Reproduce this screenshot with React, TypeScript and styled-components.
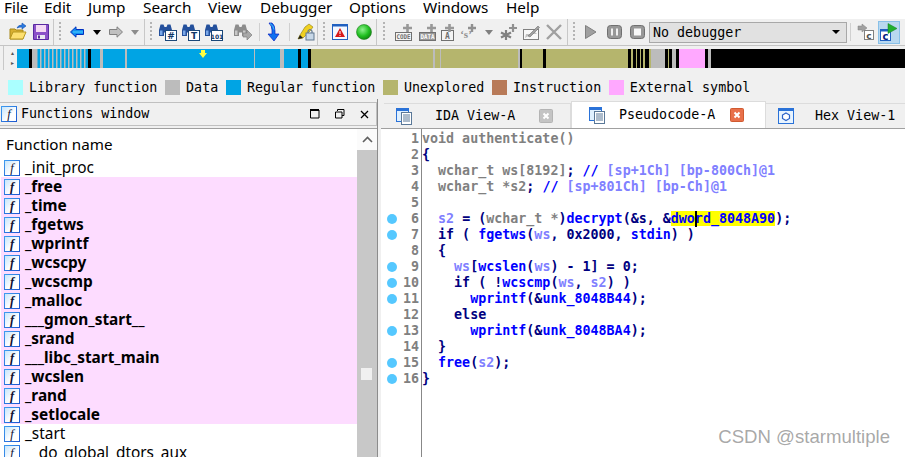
import React from 'react';
import styled, { createGlobalStyle } from 'styled-components';

const GlobalStyle = createGlobalStyle`
  html, body { margin: 0; padding: 0; background: #fff; }
  #root { width: 905px; height: 457px; overflow: hidden; }
`;

const mono = '"DejaVu Sans Mono", "Liberation Mono", monospace';
const ui = '"Noto Sans", "Open Sans", sans-serif';

const Page = styled.div`
  position: relative;
  width: 905px;
  height: 457px;
  display: flex;
  flex-direction: column;
  overflow: hidden;
  background: #f0f0f0;
`;

/* ---- menu ---- */
const MenuBar = styled.div`
  height: 19px;
  flex: none;
  background: #fff;
  display: flex;
  align-items: flex-start;
  font: 15.3px/15px ${ui};
  color: #000;
`;
const MenuItem = styled.span<{ $w: number }>`
  width: ${p => p.$w}px;
  flex: none;
  padding-left: 4px;
  box-sizing: border-box;
`;

/* ---- toolbar ---- */
const ToolBar = styled.div`
  height: 27px;
  flex: none;
  display: flex;
  background: #f0f0f0;
  border-bottom: 1px solid #c4c4c4;
  box-sizing: border-box;
`;
const ToolGroup = styled.div<{ $w: number; $last?: boolean }>`
  width: ${p => p.$w}px;
  flex: ${p => (p.$last ? '1' : 'none')};
  display: flex;
  align-items: center;
  box-sizing: border-box;
  border-right: ${p => (p.$last ? 'none' : '1px solid #c8c8c8')};
`;
const Grip = styled.div<{ $w: number }>`
  width: ${p => p.$w}px;
  flex: none;
  height: 20px;
  display: flex;
  justify-content: center;
  &::before {
    content: '';
    width: 2px;
    height: 100%;
    background: repeating-linear-gradient(#b4b4b4 0 2px, transparent 2px 4px);
  }
`;
const Slot = styled.div<{ $w: number }>`
  width: ${p => p.$w}px;
  flex: none;
  height: 24px;
  display: flex;
  align-items: center;
  justify-content: center;
  svg { flex: none; display: block; overflow: visible; }
`;
const ThinSep = styled.div`
  width: 10px;
  flex: none;
  height: 18px;
  display: flex;
  justify-content: center;
  &::before { content: ''; width: 1px; background: #d0d0d0; }
`;
const ActiveSlot = styled(Slot)`
  height: 23px;
  background: #b8d8f0;
  border: 1px solid #88c0e8;
  box-sizing: border-box;
  margin-left: 1px;
`;
const DebuggerSelect = styled.div`
  width: 198px;
  height: 21px;
  flex: none;
  margin-left: 1px;
  box-sizing: border-box;
  border: 1px solid #a8a8a8;
  background: #e1e1e1;
  display: flex;
  align-items: center;
  justify-content: space-between;
  padding: 0 6px 0 3px;
  font: 13.33px/19px ${mono};
  color: #000;
`;
const SelectArrow = styled.span`
  width: 0;
  height: 0;
  border-left: 4px solid transparent;
  border-right: 4px solid transparent;
  border-top: 4px solid #000;
`;

/* ---- navigation band ---- */
const NavArea = styled.div`
  height: 26px;
  flex: none;
  display: flex;
  align-items: flex-start;
`;
const NavGrip = styled.div`
  width: 17px;
  height: 24px;
  flex: none;
  box-sizing: border-box;
  border-left: 1px solid #c8c8c8;
  margin-left: 3px;
  margin-right: -3px;
  color: #555;
  font: 6px/6px ${ui};
  display: flex;
  flex-direction: column;
  align-items: center;
  justify-content: center;
  gap: 4px;
`;
const NavBand = styled.svg`
  display: block;
  margin-top: 3px;
  flex: none;
`;

/* ---- legend ---- */
const Legend = styled.div`
  height: 27px;
  flex: none;
  box-sizing: border-box;
  padding: 7px 0 0 8px;
  display: flex;
  gap: 7.7px;
  align-items: flex-start;
  font: 13.33px/17px ${mono};
  color: #000;
`;
const LegendItem = styled.span`
  display: flex;
  gap: 6px;
  align-items: center;
  height: 17px;
  white-space: pre;
`;
const Swatch = styled.i<{ $c: string }>`
  width: 15px;
  height: 15px;
  background: ${p => p.$c};
  display: block;
  flex: none;
`;

/* ---- panels ---- */
const Panels = styled.div`
  flex: 1;
  min-height: 0;
  display: flex;
`;
const LeftPanel = styled.div`
  width: 378px;
  flex: none;
  display: flex;
  flex-direction: column;
  border-right: 1px solid #8c8c8c;
  box-sizing: border-box;
`;
const PanelHeader = styled.div`
  height: 24px;
  flex: none;
  box-sizing: border-box;
  margin-top: 3px;
  border: 1px solid #c0c0c0;
  border-left: none;
  display: flex;
  align-items: center;
  padding-left: 1px;
  font: 13.33px/20px ${mono};
  color: #000;
`;
const PanelTitle = styled.span`
  flex: 1;
  margin-left: 4px;
`;
const PanelBtn = styled.span<{ $w: number }>`
  width: ${p => p.$w}px;
  flex: none;
  display: flex;
  justify-content: center;
`;
const ListArea = styled.div`
  flex: 1;
  min-height: 0;
  display: flex;
  background: #fff;
  border-top: 1px solid #a0a0a0;
  margin-top: 2px;
`;
const FnList = styled.div`
  flex: 1;
  min-width: 0;
  padding-left: 1px;
`;
const FnHeader = styled.div`
  height: 29px;
  box-sizing: border-box;
  padding: 5px 0 0 5px;
  font: 15.2px/20px ${ui};
  color: #000;
`;
const FnRow = styled.div<{ $ext?: boolean }>`
  height: 19px;
  display: flex;
  align-items: center;
  gap: 5px;
  padding-left: 3px;
  background: ${p => (p.$ext ? '#fddcff' : 'transparent')};
  font: ${p => (p.$ext ? 700 : 400)} 15.4px/19px ${ui};
  color: #000;
  white-space: pre;
`;
const ScrollBar = styled.div`
  width: 20px;
  flex: none;
  display: flex;
  flex-direction: column;
`;
const ScrollUp = styled.div`
  height: 21px;
  flex: none;
  background: #fbfbfb;
  display: flex;
  align-items: center;
  justify-content: center;
`;
const ScrollTrack = styled.div`
  flex: 1;
  background: #c8c8c8;
  padding: 218px 0 0 4px;
`;
const ScrollThumb = styled.div`
  width: 11px;
  height: 12px;
  background: #f0f0f0;
`;
const Splitter = styled.div`
  width: 3px;
  flex: none;
  background: #f0f0f0;
`;

const RightPanel = styled.div`
  flex: 1;
  min-width: 0;
  display: flex;
  flex-direction: column;
`;
const TabBar = styled.div`
  height: 27px;
  flex: none;
  display: flex;
  align-items: flex-end;
  padding-left: 3px;
  border-bottom: 1px solid #a0a0a0;
  margin-top: 2px;
  overflow: hidden;
`;
const Tab = styled.div<{ $w: number; $active?: boolean }>`
  width: ${p => p.$w}px;
  height: ${p => (p.$active ? 27 : 25)}px;
  flex: none;
  box-sizing: border-box;
  display: flex;
  align-items: center;
  padding-left: ${p => (p.$active ? 17 : 12)}px;
  background: ${p => (p.$active ? '#fff' : '#f0f0f0')};
  border: 1px solid #dcdcdc;
  border-bottom: none;
  border-left-width: ${p => (p.$active ? 1 : 0)}px;
  font: 13.33px/20px ${mono};
  color: #000;
  white-space: pre;
`;
const TabLabel = styled.span<{ $ml: number; $w: number }>`
  margin-left: ${p => p.$ml}px;
  width: ${p => p.$w}px;
  flex: none;
`;

const CodeArea = styled.div`
  flex: 1;
  min-height: 0;
  background: #fff;
  display: flex;
`;
const Gutter = styled.div`
  width: 41px;
  flex: none;
  box-sizing: border-box;
  border-right: 1px solid #888;
  padding-top: 2px;
`;
const GutterRow = styled.div`
  height: 16px;
  display: flex;
  align-items: center;
  justify-content: space-between;
  padding: 0 2px 0 6px;
  font: 700 13.33px/16px ${mono};
  color: #808080;
`;
const Dot = styled.i<{ $on: boolean }>`
  width: 10px;
  height: 10px;
  border-radius: 50%;
  display: block;
  background: ${p => (p.$on ? '#55c8ff' : 'transparent')};
`;
const CodeBody = styled.div`
  flex: 1;
  min-width: 0;
  padding-top: 2px;
  font: 700 13.33px/16px ${mono};
`;
const CodeLine = styled.div`
  height: 16px;
  white-space: pre;
`;
const colours: Record<string, string> = {
  g: '#808080',
  n: '#000080',
  b: '#0000ff',
  v: '#8080ff',
};
const Tok = styled.span<{ $k: string }>`
  color: ${p => colours[p.$k]};
`;
const Highlight = styled.span`
  position: relative;
  background: #ffff00;
  color: #0000ff;
  &::after {
    content: '';
    position: absolute;
    left: 24px;
    top: 0;
    width: 2px;
    height: 16px;
    background: #000;
  }
`;
const Watermark = styled.div`
  position: absolute;
  right: 15px;
  bottom: 10px;
  font: 18.6px/20px "Liberation Sans", sans-serif;
  color: rgba(130, 130, 130, 0.7);
`;

/* ---- icons ---- */
const FnIcon = () => (
  <svg width="16" height="16" viewBox="0 0 16 16">
    <defs>
      <linearGradient id="fnb" x1="0" y1="0" x2="1" y2="1">
        <stop offset="0" stopColor="#3f9cf0" />
        <stop offset="1" stopColor="#1c58d0" />
      </linearGradient>
      <linearGradient id="fnf" x1="0" y1="0" x2="1" y2="1">
        <stop offset="0" stopColor="#c4e4fb" />
        <stop offset="0.6" stopColor="#fff" />
      </linearGradient>
    </defs>
    <rect x="0.5" y="0.5" width="15" height="15" fill="url(#fnf)" stroke="url(#fnb)" />
    <text x="8" y="12" textAnchor="middle" fontFamily="'Liberation Serif', serif" fontStyle="italic" fontSize="12.5" fill="#101030">f</text>
  </svg>
);

const DocIcon = () => (
  <svg width="16" height="17" viewBox="0 0 16 17">
    <rect x="0.5" y="0.5" width="12" height="13" fill="#dff0ff" stroke="#2a72d8" />
    <rect x="0.5" y="0.5" width="12" height="2.5" fill="#2a72d8" />
    <rect x="5.5" y="4.5" width="10" height="12" fill="#fff" stroke="#5a7898" />
    <path d="M7 7h7M7 9h7M7 11h7M7 13h7" stroke="#5a7898" />
  </svg>
);
const HexIcon = () => (
  <svg width="16" height="16" viewBox="0 0 16 16">
    <rect x="0.5" y="0.5" width="15" height="15" fill="#e8f4ff" stroke="#2a72d8" />
    <rect x="0.5" y="0.5" width="15" height="2.5" fill="#2a72d8" />
    <path d="M8 5l3.5 2v3.5L8 12.5 4.5 10.5V7z" fill="#fff" stroke="#2a62c8" strokeWidth="1.2" />
  </svg>
);
const CloseBox = ({ c }: { c: 'grey' | 'red' }) => (
  <svg width="14" height="14" viewBox="0 0 14 14">
    <rect x="0.5" y="0.5" width="13" height="13" rx="1" fill={c === 'red' ? '#e8704a' : '#c4c4c4'} stroke={c === 'red' ? '#d05a30' : '#b4b4b4'} />
    <path d="M4.5 4.5l5 5M9.5 4.5l-5 5" stroke="#fff" strokeWidth="2" />
  </svg>
);
const Folder = () => (
  <svg width="18" height="18" viewBox="0 0 18 18">
    <path d="M1 6h5l1 1h7v9H1z" fill="#d8b030" stroke="#a88818" />
    <path d="M1 16l3-7h13l-3 7z" fill="#fde070" stroke="#b89820" />
    <path d="M8 5q1-3 5-3V0l4 3-4 3V4q-3 0-5 1z" fill="#2a7ae0" stroke="#1450b0" strokeWidth="0.6" />
  </svg>
);
const Floppy = () => (
  <svg width="16" height="16" viewBox="0 0 16 16">
    <path d="M0.5 0.5h15v15h-15z" fill="#8a50c8" stroke="#5828a0" />
    <rect x="3" y="1" width="10" height="7" fill="#f4d8f4" />
    <rect x="4" y="11" width="8" height="4" fill="#e8e8f0" />
    <rect x="5" y="11.5" width="2" height="3" fill="#5828a0" />
  </svg>
);
const ArrowL = () => (
  <svg width="14" height="12" viewBox="0 0 14 12">
    <path d="M0.5 6L6 0.8V3.5H13.5V8.5H6V11.2z" fill="#1090f0" stroke="#0030c0" />
    <path d="M3 6h10" stroke="#50d0ff" />
  </svg>
);
const ArrowR = () => (
  <svg width="14" height="12" viewBox="0 0 14 12">
    <path d="M13.5 6L8 0.8V3.5H0.5V8.5H8V11.2z" fill="#c0c0c0" stroke="#808080" />
  </svg>
);
const Drop = ({ c, w = 8 }: { c: string; w?: number }) => (
  <svg width={w} height={w / 2 + 1} viewBox="0 0 8 5">
    <path d="M0 0h8L4 5z" fill={c} />
  </svg>
);
const Binoc = ({ label, grey }: { label?: string; grey?: boolean }) => {
  const c = grey ? '#8c8c8c' : '#24509c';
  return (
    <svg width="18" height="17" viewBox="0 0 18 17">
      <path d="M0 6l1.5-5.5h3L5.5 3h2l1-2.500h3L13 6v6H8V8.500H5V12H0z" fill={c} />
      <path d="M1 6.500h2.500V11H1zM9 6.500h2.500V10H9z" fill={grey ? '#c8c8c8' : '#7aa8e8'} />
      {label ? (
        <>
          <rect x="6.500" y="6.500" width="11" height="10" fill="#fff" stroke="#1c4878" />
          <text x="12" y="14.800" textAnchor="middle" fontFamily="'DejaVu Sans', sans-serif" fontWeight="700" fontSize={label.length > 1 ? 6 : 9} fill="#103868">{label}</text>
        </>
      ) : (
        <path d="M9 9h4V6l5 5-5 5v-3H9z" fill="#a8a8a8" stroke="#808080" strokeWidth="0.7" />
      )}
    </svg>
  );
};
const BlueDown = () => (
  <svg width="14" height="19" viewBox="0 0 14 19">
    <path d="M2 0h3q3 2 3 8v3h4l-5 7-6-7h4V7Q5 3 2 0z" fill="#1070f0" stroke="#0820c0" strokeWidth="0.7" />
    <path d="M3 0.5q3.500 2 4 6" stroke="#40c0f0" fill="none" />
  </svg>
);
const Marker = () => (
  <svg width="17" height="18" viewBox="0 0 17 18">
    <path d="M0 16l2-4 5-8 4-3 4 3-3 4-7 7z" fill="#f0d020" stroke="#8a7a10" strokeWidth="0.6" />
    <path d="M0 16l2-4 3 3z" fill="#202020" />
    <rect x="8" y="10" width="8" height="7" fill="#c8d8e8" stroke="#607890" />
    <path d="M10 10V8q2-3 4 0v2" fill="none" stroke="#607890" strokeWidth="1.2" />
  </svg>
);
const WarnWindow = () => (
  <svg width="16" height="16" viewBox="0 0 16 16">
    <rect x="0.5" y="0.5" width="15" height="15" fill="#f4f8ff" stroke="#2060c0" />
    <rect x="0.5" y="0.5" width="15" height="2" fill="#2060c0" />
    <path d="M8 4l5 9H3z" fill="#d81818" />
    <path d="M8 7v3M8 11v1" stroke="#fff" />
  </svg>
);
const GreenDot = () => (
  <svg width="16" height="16" viewBox="0 0 16 16">
    <defs>
      <radialGradient id="gd" cx="0.4" cy="0.35" r="0.7">
        <stop offset="0" stopColor="#90f090" />
        <stop offset="0.6" stopColor="#20c020" />
        <stop offset="1" stopColor="#108010" />
      </radialGradient>
    </defs>
    <circle cx="8" cy="8" r="7.500" fill="url(#gd)" stroke="#208020" strokeWidth="0.6" />
  </svg>
);
const PlusBox = ({ label, w = 17 }: { label: string; w?: number }) => (
  <svg width={w} height="17" viewBox={`0 0 ${w} 17`}>
    <rect x="0.5" y={w < 14 ? 6.5 : 8.5} width={w - 1} height={w < 14 ? 10 : 8} fill={label === 'DATA' ? '#989898' : '#f4f4f4'} stroke="#707070" />
    <text x={w / 2} y="15" textAnchor="middle" fontFamily="'DejaVu Sans Mono', monospace" fontSize={w < 14 ? 8 : 6.5} textLength={w < 14 ? undefined : w - 3} lengthAdjust="spacingAndGlyphs" fontWeight="700" fill={label === 'DATA' ? '#fff' : '#707070'}>{label}</text>
    <path d={`M${w - 9} 4h9M${w - 4.5} 0v8`} stroke="#989898" strokeWidth="2.600" />
  </svg>
);
const SQuote = () => (
  <svg width="18" height="18" viewBox="0 0 18 18">
    <text x="6" y="15" textAnchor="middle" fontFamily="'Liberation Serif', serif" fontWeight="700" fontSize="11" fill="#909090">‘s’</text>
    <path d="M8 5h8M12 1v8" stroke="#909090" strokeWidth="2.400" />
  </svg>
);
const Asterisk = () => (
  <svg width="17" height="16" viewBox="0 0 17 16">
    <path d="M6 6v10M1 8.500l10 5M1 13.500l10-5" stroke="#808080" strokeWidth="2.200" />
    <path d="M9 4h8M13 0v8" stroke="#909090" strokeWidth="2.200" />
  </svg>
);
const Pencil = () => (
  <svg width="17" height="16" viewBox="0 0 17 16">
    <rect x="0.5" y="5.500" width="15" height="10" fill="#f8f8f8" stroke="#808080" />
    <path d="M2 14l10-6 2 2H3z" fill="#c0c0c0" />
    <path d="M5 12L15 2l1.500 1.500L7 13z" fill="#a0a0a0" stroke="#707070" strokeWidth="0.6" />
  </svg>
);
const BigX = () => (
  <svg width="16" height="16" viewBox="0 0 16 16">
    <path d="M1 1l14 14M15 1L1 15" stroke="#a0a0a0" strokeWidth="2.400" />
  </svg>
);
const Play = () => (
  <svg width="12" height="14" viewBox="0 0 12 14">
    <path d="M0.5 0.5L11 7 0.5 13.500z" fill="#a0a0a0" stroke="#808080" />
  </svg>
);
const Pause = () => (
  <svg width="15" height="14" viewBox="0 0 15 14">
    <rect x="0.5" y="0.5" width="14" height="13" rx="3" fill="#989898" stroke="#707070" />
    <path d="M5 3.500v7M10 3.500v7" stroke="#f0f0f0" strokeWidth="2" />
  </svg>
);
const Stop = () => (
  <svg width="15" height="14" viewBox="0 0 15 14">
    <rect x="0.5" y="0.5" width="14" height="13" rx="3" fill="#989898" stroke="#707070" />
    <rect x="4" y="3.500" width="7" height="7" fill="#f8f8f8" />
  </svg>
);
const SwitchGrey = () => (
  <svg width="16" height="16" viewBox="0 0 16 16">
    <path d="M0 2h4V0l5 4-5 4V6H0z" fill="#a0a0a0" stroke="#808080" strokeWidth="0.5" />
    <rect x="6.500" y="6.500" width="9" height="9" fill="#fff" stroke="#808080" />
    <text x="11" y="14.500" textAnchor="middle" fontFamily="'DejaVu Sans', sans-serif" fontWeight="700" fontSize="9" fill="#505050">c</text>
  </svg>
);
const SwitchGreen = () => (
  <svg width="18" height="18" viewBox="0 0 18 18">
    <rect x="0.5" y="6.500" width="10" height="11" fill="#fff" stroke="#2060c0" />
    <rect x="0.5" y="6.500" width="10" height="2" fill="#2060c0" />
    <text x="5.500" y="16.500" textAnchor="middle" fontFamily="'DejaVu Sans', sans-serif" fontWeight="700" fontSize="10" fill="#002080">c</text>
    <path d="M8 0.5l9 5-9 5z" fill="#20b030" stroke="#108020" strokeWidth="0.5" />
  </svg>
);

/* ---- data ---- */
const menus: [string, number][] = [
  ['File', 40], ['Edit', 44], ['Jump', 55], ['Search', 65], ['View', 52],
  ['Debugger', 89], ['Options', 74], ['Windows', 83], ['Help', 60],
];

const B = '#00a4e4';
const K = '#000000';
const G = '#bcbcbc';
const O = '#b5b56d';
const P = '#ffa8ff';

// [start x, end x, colour] in page coordinates
const segments: [number, number, string][] = [
  [17, 29, B], [29, 32, K], [32, 36, G],
  [88, 91, K], [91, 100, B], [100, 103, G], [103, 125, B], [125, 127, G],
  [127, 254, B], [254, 255, G], [255, 280, B], [280, 284, G], [284, 298, B],
  [298, 301, K], [301, 308, B], [308, 311, K], [311, 433, O], [433, 435, G],
  [435, 440, O], [440, 441, G], [441, 518, O], [518, 520, G], [520, 522, K],
  [522, 543, O], [543, 546, K], [546, 628, O], [628, 631, K], [631, 633, O],
  [633, 636, K], [636, 637, O], [637, 640, K], [640, 641, O], [641, 643, K],
  [643, 645, O], [645, 649, K], [649, 651, O], [651, 665, G], [665, 668, K],
  [668, 669, O], [669, 672, K], [672, 676, G], [676, 679, K], [679, 705, P],
  [705, 708, K], [708, 711, G], [711, 905, K],
];
const stripes = Array.from({ length: 13 }, (_, i) => 36 + i * 4);

const legend: [string, string][] = [
  ['#aaffff', 'Library function'],
  ['#bcbcbc', 'Data'],
  ['#00a4e4', 'Regular function'],
  ['#b5b56d', 'Unexplored'],
  ['#b87a58', 'Instruction'],
  ['#ffa8ff', 'External symbol'],
];

const functions: [string, boolean][] = [
  ['_init_proc', false], ['_free', true], ['_time', true], ['_fgetws', true],
  ['_wprintf', true], ['_wcscpy', true], ['_wcscmp', true], ['_malloc', true],
  ['___gmon_start__', true], ['_srand', true], ['___libc_start_main', true],
  ['_wcslen', true], ['_rand', true], ['_setlocale', true], ['_start', false],
  ['__do_global_dtors_aux', false],
];

type Token = [string, string];
const code: { dot: boolean; toks: Token[] }[] = [
  { dot: false, toks: [['g', 'void authenticate()']] },
  { dot: false, toks: [['n', '{']] },
  { dot: false, toks: [['g', '  wchar_t ws[8192]'], ['n', ';'], ['b', ' // '], ['v', '[sp+1Ch] [bp-800Ch]@1']] },
  { dot: false, toks: [['g', '  wchar_t *s2'], ['n', ';'], ['b', ' // '], ['v', '[sp+801Ch] [bp-Ch]@1']] },
  { dot: false, toks: [] },
  { dot: true, toks: [['v', '  s2'], ['n', ' = ('], ['g', 'wchar_t *'], ['n', ')'], ['b', 'decrypt'], ['n', '(&s, &'], ['H', 'dword_8048A90'], ['n', ');']] },
  { dot: true, toks: [['n', '  if ( '], ['b', 'fgetws'], ['n', '('], ['v', 'ws'], ['n', ', 0x2000, '], ['b', 'stdin'], ['n', ') )']] },
  { dot: false, toks: [['n', '  {']] },
  { dot: true, toks: [['v', '    ws'], ['n', '['], ['b', 'wcslen'], ['n', '('], ['v', 'ws'], ['n', ') - 1] = 0;']] },
  { dot: true, toks: [['n', '    if ( !'], ['b', 'wcscmp'], ['n', '('], ['v', 'ws'], ['n', ', '], ['v', 's2'], ['n', ') )']] },
  { dot: true, toks: [['b', '      wprintf'], ['n', '(&'], ['b', 'unk_8048B44'], ['n', ');']] },
  { dot: false, toks: [['n', '    else']] },
  { dot: true, toks: [['b', '      wprintf'], ['n', '(&'], ['b', 'unk_8048BA4'], ['n', ');']] },
  { dot: false, toks: [['n', '  }']] },
  { dot: true, toks: [['b', '  free'], ['n', '('], ['v', 's2'], ['n', ');']] },
  { dot: true, toks: [['n', '}']] },
];

const App: React.FC = () => {
  return (
    <Page>
      <GlobalStyle />
      <MenuBar>
        {menus.map(([m, w]) => (
          <MenuItem key={m} $w={w}>{m}</MenuItem>
        ))}
      </MenuBar>

      <ToolBar>
        <ToolGroup $w={54}>
          <Slot $w={6} />
          <Slot $w={24}><Folder /></Slot>
          <Slot $w={22}><Floppy /></Slot>
        </ToolGroup>
        <ToolGroup $w={91}>
          <Grip $w={12} />
          <Slot $w={22}><ArrowL /></Slot>
          <Slot $w={18}><Drop c="#000" /></Slot>
          <Slot $w={20}><ArrowR /></Slot>
          <Slot $w={18}><Drop c="#8c8c8c" /></Slot>
        </ToolGroup>
        <ToolGroup $w={173}>
          <Grip $w={12} />
          <Slot $w={22}><Binoc label="#" /></Slot>
          <Slot $w={23}><Binoc label="T" /></Slot>
          <Slot $w={23}><Binoc label="101" /></Slot>
          <Slot $w={7} />
          <Slot $w={22}><Binoc grey /></Slot>
          <ThinSep />
          <Slot $w={20}><BlueDown /></Slot>
          <ThinSep />
          <Slot $w={24}><Marker /></Slot>
        </ToolGroup>
        <ToolGroup $w={59}>
          <Grip $w={11} />
          <Slot $w={22}><WarnWindow /></Slot>
          <Slot $w={25}><GreenDot /></Slot>
        </ToolGroup>
        <ToolGroup $w={191}>
          <Grip $w={14} />
          <Slot $w={24}><PlusBox label="CODE" w={17} /></Slot>
          <Slot $w={24}><PlusBox label="DATA" w={17} /></Slot>
          <Slot $w={16}><PlusBox label="A" w={13} /></Slot>
          <Slot $w={28}><SQuote /></Slot>
          <Slot $w={12}><Drop c="#808080" /></Slot>
          <Slot $w={26}><Asterisk /></Slot>
          <Slot $w={20}><Pencil /></Slot>
          <Slot $w={26}><BigX /></Slot>
        </ToolGroup>
        <ToolGroup $w={337} $last>
          <Grip $w={12} />
          <Slot $w={22}><Play /></Slot>
          <Slot $w={24}><Pause /></Slot>
          <Slot $w={22}><Stop /></Slot>
          <DebuggerSelect>
            No debugger
            <SelectArrow />
          </DebuggerSelect>
          <Slot $w={7}><ThinSep /></Slot>
          <Slot $w={23}><SwitchGrey /></Slot>
          <ActiveSlot $w={22}><SwitchGreen /></ActiveSlot>
        </ToolGroup>
      </ToolBar>

      <NavArea>
        <NavGrip>
          <span>▴</span>
          <span>▸</span>
        </NavGrip>
        <NavBand width="888" height="19" viewBox="17 0 888 19">
          <rect x="36" y="0" width="52" height="19" fill={B} />
          {stripes.map(x => (
            <rect key={x} x={x} y="0" width="1.5" height="19" fill={G} />
          ))}
          {segments.map(([a, b, c]) => (
            <rect key={a} x={a} y="0" width={b - a} height="19" fill={c} />
          ))}
          <path d="M201 1h4v3h2l-4 5-4-5h2z" fill="#ffff40" />
        </NavBand>
      </NavArea>

      <Legend>
        {legend.map(([c, t]) => (
          <LegendItem key={t}>
            <Swatch $c={c} />
            {t}
          </LegendItem>
        ))}
      </Legend>

      <Panels>
        <LeftPanel>
          <PanelHeader>
            <FnIcon />
            <PanelTitle>Functions window</PanelTitle>
            <PanelBtn $w={25}>
              <svg width="10" height="10" viewBox="0 0 10 10"><path d="M0.5 1h8.500v8H0.5z" fill="none" stroke="#000" /><path d="M0 1h9" stroke="#000" strokeWidth="2" /></svg>
            </PanelBtn>
            <PanelBtn $w={25}>
              <svg width="10" height="10" viewBox="0 0 10 10"><path d="M2.500 2V0.5h6.500v6H7" fill="none" stroke="#000" /><path d="M0.5 3h6.500v6H0.5z" fill="#f0f0f0" stroke="#000" /></svg>
            </PanelBtn>
            <PanelBtn $w={24}>
              <svg width="9" height="9" viewBox="0 0 9 9"><path d="M1 1l7 7M8 1L1 8" stroke="#000" strokeWidth="1.3" /></svg>
            </PanelBtn>
          </PanelHeader>
          <ListArea>
            <FnList>
              <FnHeader>Function name</FnHeader>
              {functions.map(([name, ext]) => (
                <FnRow key={name} $ext={ext}>
                  <FnIcon />
                  {name}
                </FnRow>
              ))}
            </FnList>
            <ScrollBar>
              <ScrollUp>
                <svg width="11" height="7" viewBox="0 0 11 7"><path d="M1 6l4.500-4.500L10 6" fill="none" stroke="#606060" strokeWidth="1.6" /></svg>
              </ScrollUp>
              <ScrollTrack>
                <ScrollThumb />
              </ScrollTrack>
            </ScrollBar>
          </ListArea>
        </LeftPanel>
        <Splitter />
        <RightPanel>
          <TabBar>
            <Tab $w={187}>
              <DocIcon />
              <TabLabel $ml={23} $w={104}>IDA View-A</TabLabel>
              <CloseBox c="grey" />
            </Tab>
            <Tab $w={195} $active>
              <DocIcon />
              <TabLabel $ml={14} $w={111}>Pseudocode-A</TabLabel>
              <CloseBox c="red" />
            </Tab>
            <Tab $w={140}>
              <HexIcon />
              <TabLabel $ml={21} $w={90}>Hex View-1</TabLabel>
            </Tab>
          </TabBar>
          <CodeArea>
            <Gutter>
              {code.map((l, i) => (
                <GutterRow key={i}>
                  <Dot $on={l.dot} />
                  {i + 1}
                </GutterRow>
              ))}
            </Gutter>
            <CodeBody>
              {code.map((l, i) => (
                <CodeLine key={i}>
                  {l.toks.map(([k, t], j) =>
                    k === 'H' ? (
                      <Highlight key={j}>{t}</Highlight>
                    ) : (
                      <Tok key={j} $k={k}>{t}</Tok>
                    )
                  )}
                </CodeLine>
              ))}
            </CodeBody>
          </CodeArea>
        </RightPanel>
      </Panels>
      <Watermark>CSDN @starmultiple</Watermark>
    </Page>
  );
};

export default App;
